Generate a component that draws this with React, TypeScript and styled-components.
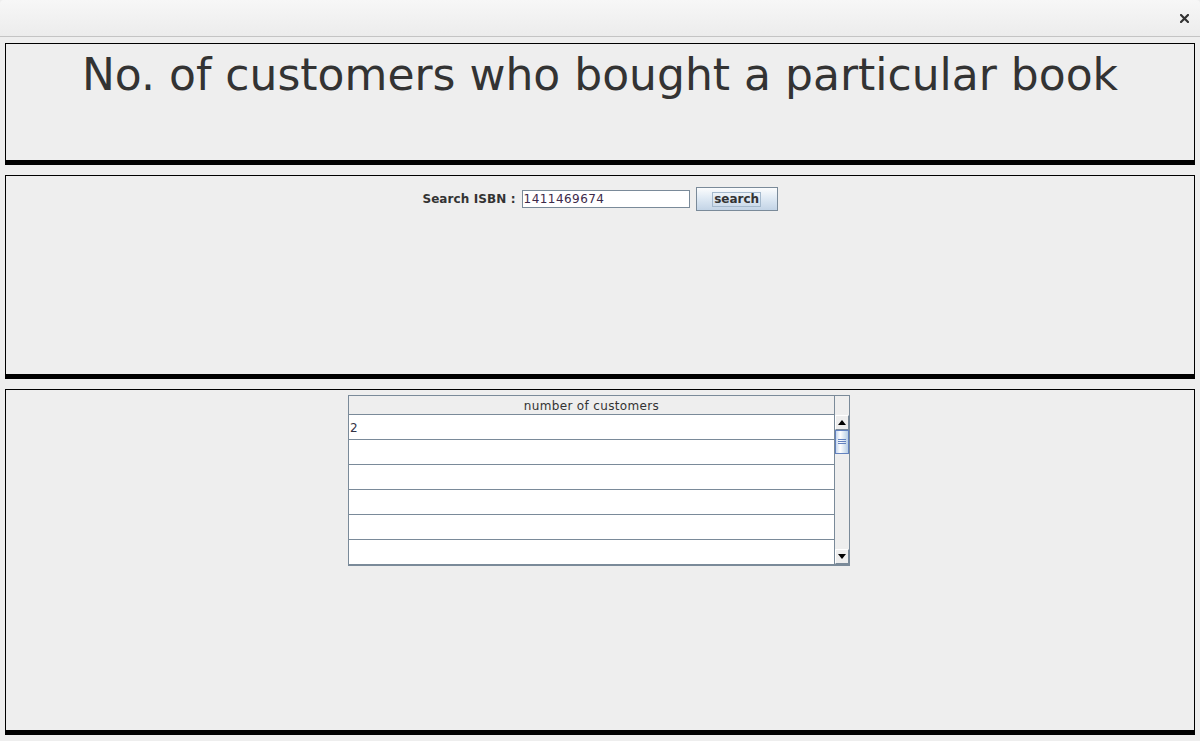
import React from "react";
import styled, { createGlobalStyle } from "styled-components";

const Global = createGlobalStyle`
  html, body { margin: 0; padding: 0; background: #eeeeee; }
  body { font-family: "DejaVu Sans", "Noto Sans", sans-serif; color: #333333; }
  * { box-sizing: border-box; }
`;

const Window = styled.div`
  width: 1200px;
  height: 741px;
  display: flex;
  flex-direction: column;
  background: #eeeeee;
  overflow: hidden;
`;

const TitleBar = styled.div`
  height: 37px;
  flex: none;
  display: flex;
  align-items: center;
  justify-content: flex-end;
  padding-right: 11px;
  background: linear-gradient(#f7f7f7, #ececec);
  border-bottom: 1px solid #c4c4c4;
  border-top-left-radius: 4px;
  border-top-right-radius: 4px;
`;

const CloseIcon = styled.svg`
  width: 9px;
  height: 9px;
  margin-top: 1px;
`;

const Content = styled.div`
  flex: 1;
  display: flex;
  flex-direction: column;
  gap: 10px;
  padding: 6px 5px 0 5px;
`;

const Panel = styled.div<{ $h: number }>`
  height: ${(p) => p.$h}px;
  flex: none;
  border: 1px solid #000;
  border-bottom-width: 5px;
  display: flex;
  flex-direction: column;
  align-items: center;
`;

const Title = styled.h1`
  margin: 5px 0 0 0;
  font-weight: normal;
  font-size: 44px;
  line-height: 51px;
  color: #333333;
  white-space: nowrap;
`;

const SearchRow = styled.div`
  margin-top: 11px;
  display: flex;
  align-items: center;
  gap: 6px;
  height: 24px;
`;

const Label = styled.span`
  font-weight: bold;
  font-size: 12px;
  letter-spacing: 0.1px;
  color: #333333;
`;

const Input = styled.div`
  width: 168px;
  height: 18px;
  background: #fff;
  border: 1px solid #7a8a99;
  font-size: 12px;
  line-height: 16px;
  padding-left: 1px;
  color: #3d2a4a;
  letter-spacing: 0.45px;
`;

const Button = styled.div`
  width: 82px;
  height: 24px;
  border: 1px solid #7a8a99;
  background: linear-gradient(#fbfcfd, #dde8f3 50%, #c3d4e6);
  display: flex;
  align-items: center;
  justify-content: center;
`;

const Focus = styled.span`
  font-weight: bold;
  font-size: 12px;
  color: #333333;
  border: 1px solid #a3b8cc;
  padding: 0 1px;
  line-height: 13px;
`;

const TableWrap = styled.div`
  margin-top: 5px;
  margin-right: 2px;
  display: flex;
  border: 1px solid #7a8a99;
  border-right: none;
`;

const TableMain = styled.div`
  width: 485px;
  display: flex;
  flex-direction: column;
`;

const Header = styled.div`
  height: 19px;
  overflow: hidden;
  border-bottom: 1px solid #7a8a99;
  font-size: 12px;
  letter-spacing: 0.35px;
  line-height: 21px;
  text-align: center;
  color: #333333;
  background: #eeeeee;
`;

const Row = styled.div`
  height: 25px;
  overflow: hidden;
  background: #fff;
  border-bottom: 1px solid #7a8a99;
  font-size: 12px;
  line-height: 27px;
  padding-left: 1px;
  color: #333344;
`;

const Side = styled.div`
  width: 16px;
  display: flex;
  flex-direction: column;
  border-left: 1px solid #7a8a99;
  border-right: 1px solid #7a8a99;
  border-bottom: 1px solid #7a8a99;
`;

const Corner = styled.div`
  height: 19px;
  background: #eeeeee;
`;

const Track = styled.div`
  flex: 1;
  display: flex;
  flex-direction: column;
  background: #eeeeee;
`;

const ArrowBtn = styled.div`
  height: 15px;
  background: #eeeeee;
  border: 1px solid #ffffff;
  border-right-color: #7a8a99;
  border-bottom-color: #7a8a99;
  display: flex;
  align-items: center;
  justify-content: center;
`;

const Thumb = styled.div`
  height: 24px;
  border: 1px solid #6382bf;
  background: linear-gradient(90deg, #c7d8ee, #ffffff 35%, #b8cfe5);
  display: flex;
  align-items: center;
  justify-content: center;
`;

const Spacer = styled.div`
  flex: 1;
`;

const rows = ["2", "", "", "", "", ""];

export default function App() {
  return (
    <Window>
      <Global />
      <TitleBar>
        <CloseIcon viewBox="0 0 9 9">
          <path d="M1 1L8 8M8 1L1 8" stroke="#333" strokeWidth="2.2" strokeLinecap="square" />
        </CloseIcon>
      </TitleBar>
      <Content>
        <Panel $h={122}>
          <Title>No. of customers who bought a particular book</Title>
        </Panel>
        <Panel $h={204}>
          <SearchRow>
            <Label>Search ISBN :</Label>
            <Input>1411469674</Input>
            <Button>
              <Focus>search</Focus>
            </Button>
          </SearchRow>
        </Panel>
        <Panel $h={346}>
          <TableWrap>
            <TableMain>
              <Header>number of customers</Header>
              {rows.map((r, i) => (
                <Row key={i}>{r}</Row>
              ))}
            </TableMain>
            <Side>
              <Corner />
              <Track>
                <ArrowBtn>
                  <svg width="8" height="5" viewBox="0 0 8 5">
                    <path d="M0 5L4 0L8 5Z" fill="#000" />
                  </svg>
                </ArrowBtn>
                <Thumb>
                  <svg width="8" height="6" viewBox="0 0 8 6">
                    <path d="M0 0.5H8M0 2.5H8M0 4.5H8" stroke="#6382bf" strokeWidth="1" />
                  </svg>
                </Thumb>
                <Spacer />
                <ArrowBtn>
                  <svg width="8" height="5" viewBox="0 0 8 5">
                    <path d="M0 0L4 5L8 0Z" fill="#000" />
                  </svg>
                </ArrowBtn>
              </Track>
            </Side>
          </TableWrap>
        </Panel>
      </Content>
    </Window>
  );
}
